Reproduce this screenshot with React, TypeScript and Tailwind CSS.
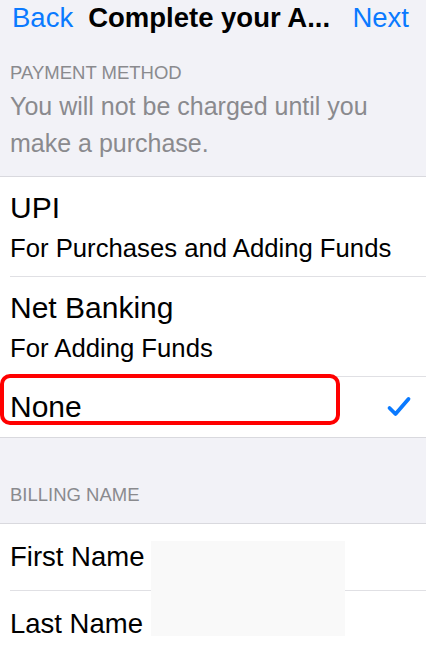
import React from "react";

function Check() {
  return (
    <svg width="26" height="22" viewBox="0 0 26 22" fill="none">
      <path
        d="M3.5 12 L9.5 18 L22.5 3"
        stroke="#0a7aff"
        strokeWidth="3.8"
        strokeLinecap="round"
        strokeLinejoin="round"
      />
    </svg>
  );
}

export default function App() {
  return (
    <div
      className="w-[426px] h-[653px] overflow-hidden bg-[#f2f2f7] text-black"
      style={{ fontFamily: '"Liberation Sans", Arial, sans-serif' }}
    >
      {/* Nav bar */}
      <div className="h-[36px] flex items-center pl-[12px] pr-[17px] text-[27.5px] leading-[36px]">
        <span className="text-[#0a7aff]">Back</span>
        <span className="ml-[15px] font-bold">Complete your A...</span>
        <span className="ml-auto text-[#0a7aff]">Next</span>
      </div>

      {/* Payment method header */}
      <div className="pl-[10px] pt-[26px] pb-[14px] border-b border-[#d9d9de]">
        <div className="text-[18.5px] leading-[22px] text-[#8a8a8e]">PAYMENT METHOD</div>
        <div className="mt-[4px] text-[25px] leading-[37px] text-[#8a8a8e]">
          You will not be charged until you
          <br />
          make a purchase.
        </div>
      </div>

      {/* Payment options */}
      <div className="bg-white border-b border-[#d9d9de]">
        <div className="pl-[10px]">
          <div className="pt-[13px] pb-[10px] border-b border-[#e0e0e4]">
            <div className="text-[30px] leading-[36px]">UPI</div>
            <div className="mt-[4px] text-[25.7px] leading-[36px]">For Purchases and Adding Funds</div>
          </div>
          <div className="pt-[13px] pb-[10px] border-b border-[#e0e0e4]">
            <div className="text-[30px] leading-[36px]">Net Banking</div>
            <div className="mt-[4px] text-[25.7px] leading-[36px]">For Adding Funds</div>
          </div>
        </div>
        <div className="relative h-[60px] flex items-center pl-[10px] pr-[14px]">
          <span className="text-[30px] leading-[36px]">None</span>
          <span className="ml-auto">
            <Check />
          </span>
          <div className="absolute left-0 top-[-3px] w-[340px] h-[51px] border-[4px] border-[#ff0000] rounded-[10px]" />
        </div>
      </div>

      {/* Billing name header */}
      <div className="pl-[10px] pt-[46px] pb-[17px] border-b border-[#d9d9de]">
        <div className="text-[18.5px] leading-[22px] text-[#8a8a8e]">BILLING NAME</div>
      </div>

      {/* Billing rows */}
      <div className="relative bg-white h-[200px]">
        <div className="pl-[10px]">
          <div className="h-[67px] flex items-center border-b border-[#e0e0e4] text-[27.5px]">
            First Name .
          </div>
          <div className="h-[66px] flex items-center text-[27.5px]">Last Name</div>
        </div>
        {/* redacted values */}
        <div className="absolute left-[151px] top-[17px] w-[194px] h-[95px] bg-[#f9f9f9]" />
      </div>
    </div>
  );
}
